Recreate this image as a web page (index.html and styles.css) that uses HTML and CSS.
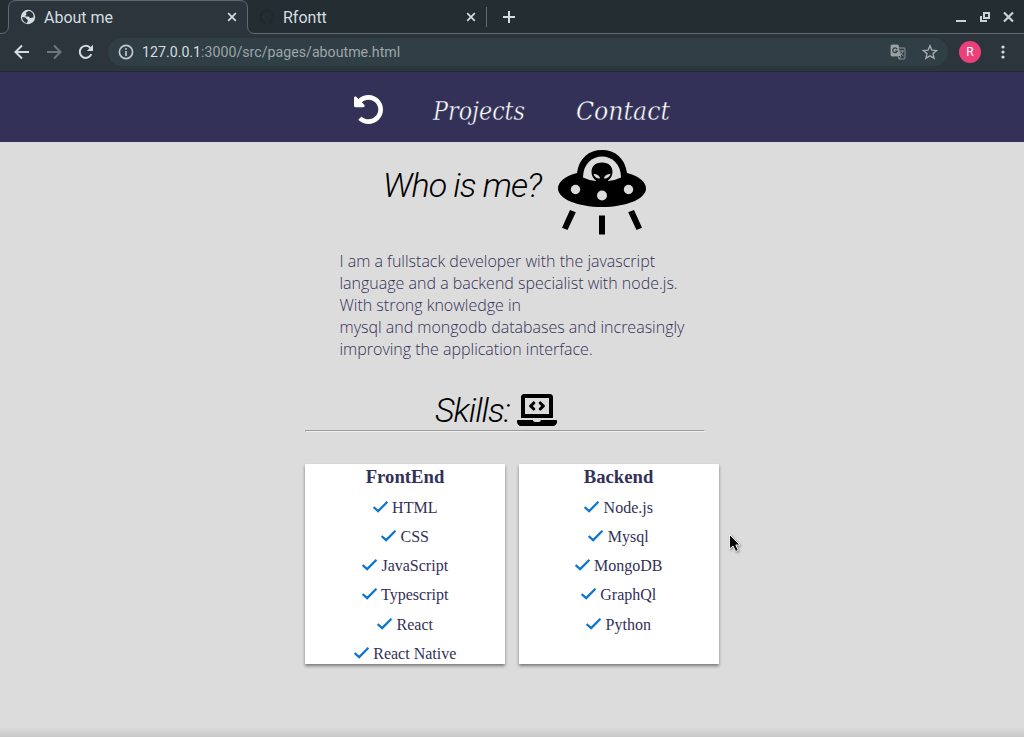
FILE: index.html
```html
<!DOCTYPE html>
<html lang="en">
<head>
<meta charset="utf-8">
<title>About me</title>
<link rel="stylesheet" href="styles.css">
</head>
<body>
<div class="browser">
  <header class="tabstrip">
    <svg class="tab-outline" width="1024" height="35" viewBox="0 0 1024 35"><path class="tab-shape" d="M-1 33.5H1Q8.500 33.500 8.500 26V8Q8.500 .5 16 .5H240Q247.500 .5 247.500 8V26Q247.500 33.500 255 33.500H1025V36H-1Z"/></svg>
    <div class="tab">
      <svg class="favicon" viewBox="0 0 16 16"><circle cx="8" cy="8" r="7.200" fill="#d3dde0"/><path d="M2 8.200c1.800-.2 3.700.1 4.200 1.400.3 1 1.700.7 1.700 1.900 0 .9-.8 1-.8 2.700C4 13.500 2.100 11.200 2 8.200ZM8 2c-.3 1-1.700.8-2 1.800-.2.800.7 1 .5 1.800-.2.700-1.200.6-1.200 1.300 0 .8 1.600.4 3 .5 1.200.1 1.100 1.600 2.300 1.700 1 .1 1.200-.7 2.900-.7C14 4.400 11.700 2 8 2Z" fill="#2b353b"/></svg>
      <span class="tab-title">About me</span>
      <svg class="close" viewBox="0 0 10 10"><path d="M1.200 1.200l7.600 7.600M8.800 1.200L1.200 8.800"/></svg>
    </div>
    <div class="tab second">
      <svg class="favicon" viewBox="0 0 16 16"><circle cx="8" cy="8" r="7.500" fill="#20292e"/><path d="M6 15v-3c-2-.7-3-2-3-4s.5-2.500 1-3V3l2 1h4l2-1v2c.5.500 1 1 1 3s-1 3.300-3 4v3Z" fill="#232d32"/></svg>
      <span class="tab-title">Rfontt</span>
      <svg class="close" viewBox="0 0 10 10"><path d="M1.200 1.200l7.600 7.600M8.800 1.200L1.200 8.800"/></svg>
    </div>
    <i class="divider"></i>
    <svg class="newtab" viewBox="0 0 12 12"><path d="M6 0v12M0 6h12"/></svg>
    <svg class="winctl" viewBox="0 0 60 14"><path d="M1 11h10" stroke-width="2"/><path d="M29 3h5v5h-5z" stroke-width="2"/><path d="M26 6v5h6" stroke-width="2"/><path d="M49 2.500l9 9M58 2.500l-9 9" stroke-width="2.200"/></svg>
  </header>
  <div class="toolbar">
    <svg class="ic back" viewBox="0 0 16 16"><path d="M15 8H2M8 1.500L1.500 8 8 14.500"/></svg>
    <svg class="ic forward" viewBox="0 0 16 16"><path d="M1 8h13M8 1.500L14.500 8 8 14.500"/></svg>
    <svg class="ic reload" viewBox="0 0 16 16"><path d="M13.300 10.200A6 6 0 1 1 12 3.600L13.500 5"/><path d="M15 .8V7H8.800z" fill="#d3dde0" stroke="none"/></svg>
    <div class="omnibox">
      <svg class="info" viewBox="0 0 16 16"><circle cx="8" cy="8" r="6.600"/><path d="M8 7v5M8 4v1.700"/></svg>
      <span class="url"><b>127.0.0.1</b>:3000/src/pages/aboutme.html</span>
      <svg class="translate" viewBox="0 0 16 16"><path d="M2 1h6l1 3h5q1 0 1 1v9q0 1-1 1H9l-1-3H2q-1 0-1-1V2q0-1 1-1Z" fill="none" stroke="#8d9598"/><path d="M1 1h7l3 11H1z" fill="#9aa1a4"/><path d="M7.200 5.300A2.300 2.300 0 1 0 7.300 7H5" fill="none" stroke="#303e45" stroke-width="1.200"/><path d="M9.500 7H14M12 6v1M13 7q-.5 3-3 4M10.500 8.500q1 2.500 3 3.500M9 15l2-3" fill="none" stroke="#8d9598"/></svg>
      <svg class="star" viewBox="0 0 16 16"><path d="M8 1.700l1.900 4.400 4.700.4L11 9.600l1.100 4.600L8 11.800l-4.100 2.400L5 9.600 1.400 6.500l4.700-.4z"/></svg>
    </div>
    <span class="avatar">R</span>
    <svg class="kebab" viewBox="0 0 4 14"><circle cx="2" cy="2" r="1.600"/><circle cx="2" cy="7" r="1.600"/><circle cx="2" cy="12" r="1.600"/></svg>
  </div>
</div>

<nav class="nav">
  <a class="home"><svg viewBox="8 8 496 496" width="29" height="29"><path fill="#fff" d="M255.545 8c-66.269.119-126.438 26.233-170.86 68.685L48.971 40.971C33.851 25.851 8 36.559 8 57.941V192c0 13.255 10.745 24 24 24h134.059c21.382 0 32.090-25.851 16.971-40.971l-41.750-41.750c30.864-28.899 70.801-44.907 113.230-45.273 92.398-.798 170.283 73.977 169.484 169.442C423.236 348.009 349.816 424 256 424c-41.127 0-79.997-14.678-110.630-41.556-4.743-4.161-11.906-3.908-16.368.553L89.340 422.659c-4.872 4.872-4.631 12.815.482 17.433C133.798 479.813 192.074 504 256 504c136.966 0 247.999-111.033 248-247.998C504.001 119.193 392.354 7.755 255.545 8z"/></svg></a>
  <a><svg class="link" width="104" height="44"><text x="5" y="28" textLength="92" lengthAdjust="spacingAndGlyphs">Projects</text></svg></a>
  <a class="contact"><svg class="link" width="104" height="44"><text x="5" y="28" textLength="94" lengthAdjust="spacingAndGlyphs">Contact</text></svg></a>
</nav>

<main class="page">
  <div class="who">
    <h1>Who is me?</h1>
    <svg class="ufo" width="88" height="86" viewBox="0 0 88 86">
      <path d="M19 23C21 8 31 0 44 0S67 8 69 23C81 26 88 32 88 38.500 88 49 68 57 44 57S0 49 0 38.500C0 32 7 26 19 23Z"/>
      <path class="hole" d="M25 27.500C25 14 34 6.500 44 6.500s19 7.500 19 21q-6 3-13 3.500H38Q31 30.500 25 27.500Z"/>
      <path d="M44 12.500c7 0 10.500 4 10.500 9.500 0 4-2 6.500-4.500 8.500v2H38v-2c-2.500-2-4.500-4.500-4.500-8.500 0-5.500 3.500-9.500 10.500-9.500Z"/>
      <path class="hole" d="M35.500 23.800c3.300.2 5.800 1.800 6.800 4.700-3.500.2-6.200-1.600-6.800-4.700ZM52.500 23.800c-3.300.2-5.800 1.800-6.800 4.700 3.500.2 6.200-1.600 6.800-4.700Z"/>
      <circle class="hole" cx="17.500" cy="39.500" r="4.700"/><circle class="hole" cx="44" cy="45.500" r="5"/><circle class="hole" cx="70.500" cy="39.500" r="4.700"/>
      <path d="M12 60l5.800 2.300L9.500 80 4 77.800ZM41 65.500h6v19h-6ZM76 60l-5.800 2.300L78.500 80l5.500-2.200Z"/>
    </svg>
  </div>
  <p class="bio">I am a fullstack developer with the javascript<br>language and a backend specialist with node.js.<br>With strong knowledge in<br>mysql and mongodb databases and increasingly<br>improving the application interface.</p>
  <div class="skills">
    <h2>Skills:</h2>
    <svg width="40" height="32" viewBox="0 0 640 512"><path d="M255.030 261.650c6.250 6.250 16.380 6.250 22.630 0l11.310-11.310c6.250-6.250 6.250-16.380 0-22.630L253.250 192l35.710-35.720c6.250-6.250 6.250-16.380 0-22.630l-11.310-11.310c-6.250-6.250-16.380-6.250-22.630 0l-58.340 58.340c-6.250 6.250-6.250 16.380 0 22.630l58.350 58.340zm96.010-11.300l11.310 11.310c6.250 6.250 16.380 6.250 22.630 0l58.340-58.340c6.250-6.250 6.250-16.380 0-22.630l-58.340-58.340c-6.250-6.250-16.380-6.250-22.630 0l-11.310 11.310c-6.250 6.250-6.250 16.380 0 22.630L386.750 192l-35.710 35.720c-6.250 6.250-6.250 16.380 0 22.630zM624 416H381.540c-.74 19.810-14.710 32-32.740 32H288c-18.690 0-33.020-17.470-32.770-32H16c-8.800 0-16 7.200-16 16v16c0 35.200 28.800 64 64 64h512c35.200 0 64-28.800 64-64v-16c0-8.800-7.200-16-16-16zM576 48c0-26.400-21.600-48-48-48H112C85.600 0 64 21.600 64 48v336h512V48zm-64 272H128V64h384v256z"/></svg>
  </div>
  <hr class="rule">
  <div class="cards">
    <section class="card">
      <h3>FrontEnd</h3>
      <ul>
        <li><svg class="check" viewBox="0 0 14 12"><path d="M.5 6.500L4.800 10.300 13.500 1.500"/></svg>HTML</li>
        <li><svg class="check" viewBox="0 0 14 12"><path d="M.5 6.500L4.800 10.300 13.500 1.500"/></svg>CSS</li>
        <li><svg class="check" viewBox="0 0 14 12"><path d="M.5 6.500L4.800 10.300 13.500 1.500"/></svg>JavaScript</li>
        <li><svg class="check" viewBox="0 0 14 12"><path d="M.5 6.500L4.800 10.300 13.500 1.500"/></svg>Typescript</li>
        <li><svg class="check" viewBox="0 0 14 12"><path d="M.5 6.500L4.800 10.300 13.500 1.500"/></svg>React</li>
        <li><svg class="check" viewBox="0 0 14 12"><path d="M.5 6.500L4.800 10.300 13.500 1.500"/></svg>React Native</li>
      </ul>
    </section>
    <section class="card backend">
      <h3>Backend</h3>
      <ul>
        <li><svg class="check" viewBox="0 0 14 12"><path d="M.5 6.500L4.800 10.300 13.500 1.500"/></svg>Node.js</li>
        <li><svg class="check" viewBox="0 0 14 12"><path d="M.5 6.500L4.800 10.300 13.500 1.500"/></svg>Mysql</li>
        <li><svg class="check" viewBox="0 0 14 12"><path d="M.5 6.500L4.800 10.300 13.500 1.500"/></svg>MongoDB</li>
        <li><svg class="check" viewBox="0 0 14 12"><path d="M.5 6.500L4.800 10.300 13.500 1.500"/></svg>GraphQl</li>
        <li><svg class="check" viewBox="0 0 14 12"><path d="M.5 6.500L4.800 10.300 13.500 1.500"/></svg>Python</li>
      </ul>
    </section>
  </div>
</main>
<svg class="cursor" width="16" height="22" viewBox="0 0 16 22"><path d="M1.500 1.500V16L5 13l2.700 5.500 2.600-1.200L7.800 12H12Z" fill="#0a0a0a" stroke="#eee" stroke-width="1"/></svg>
</body>
</html>
```
FILE: styles.css
```css
* { box-sizing: border-box; }
body {
  margin: 0;
  height: 737px;
  overflow: hidden;
  background: linear-gradient(#dcdcdc 0 727px, #c8c8c8 737px);
  font-family: "Liberation Serif", serif;
  color: #333157;
}
svg { display: block; flex: none; }
h1, h2, h3, p, ul { margin: 0; padding: 0; }

.browser {
  height: 72px;
  background: #2b353b;
  border-bottom: 1px solid #20292e;
  font-family: Roboto, sans-serif;
  color: #d3dde0;
}
.tabstrip {
  position: relative;
  display: flex;
  align-items: center;
  height: 34px;
  padding-left: 8px;
  background: #232d32;
}
.tab-outline { position: absolute; left: 0; top: 0; }
.tab-shape { fill: #2b353b; stroke: #5f6b70; }
.tab {
  position: relative;
  display: flex;
  align-items: center;
  width: 239px;
  height: 34px;
  padding: 0 10px 0 12px;
}
.favicon { width: 16px; height: 16px; }
.tab-title { flex: 1; margin-left: 8px; padding-top: 2px; font-size: 16px; line-height: 34px; }
.close { width: 10px; height: 10px; fill: none; stroke: #d3dde0; stroke-width: 1.7; }
.divider { width: 1px; height: 20px; background: #5f6b70; }
.newtab { position: relative; width: 12px; height: 12px; margin-left: 16px; stroke: #d3dde0; stroke-width: 2; }
.winctl { position: relative; width: 60px; height: 14px; margin: 0 9px 0 auto; fill: none; stroke: #c8d3d7; }

.toolbar { display: flex; align-items: center; height: 36px; padding: 0 19px 0 14px; }
.ic { width: 16px; height: 16px; margin-right: 16px; fill: none; stroke: #d3dde0; stroke-width: 2; }
.forward { stroke: #6b777c; }
.reload { margin-right: 14px; }
.omnibox {
  display: flex;
  align-items: center;
  width: 840px;
  height: 28px;
  padding: 0 10px;
  border-radius: 14px;
  background: #303e45;
}
.info { width: 16px; height: 16px; fill: none; stroke: #c3ccd0; stroke-width: 1.6; }
.url { flex: 1; margin-left: 8px; font-size: 14.200px; color: #9da6aa; }
.url b { font-weight: 400; color: #d3dde0; }
.translate { width: 16px; height: 16px; }
.star { width: 16px; height: 16px; margin-left: 16px; fill: none; stroke: #a2aaae; stroke-width: 1.4; }
.avatar {
  width: 22px;
  height: 22px;
  margin-left: 11px;
  border-radius: 50%;
  background: #ec407a;
  color: #fff;
  font-size: 12px;
  line-height: 22px;
  text-align: center;
}
.kebab { width: 4px; height: 14px; margin-left: auto; fill: #d3dde0; }

.nav { display: flex; height: 70px; padding-left: 354px; background: #333157; }
.home { margin-top: 23px; margin-right: 45px; }
.nav a + a { padding-top: 20px; }
.nav .contact { margin-left: 39px; }
.link { overflow: visible; }
.link text {
  font: italic 26px "DejaVu Serif Condensed", "DejaVu Serif", serif;
  fill: #fff;
  stroke: #333157;
  stroke-width: .4px;
}

.page { width: 414px; margin-left: 305px; }
.who { display: flex; padding: 8px 0 0 78px; height: 108px; }
h1, h2 {
  font: italic 300 34px/40px Roboto, sans-serif;
  letter-spacing: -1px;
  color: #000;
}
.who h1 { width: 175px; padding-top: 15px; white-space: nowrap; }
.hole { fill: #dcdcdc; }
.bio { padding-left: 34.500px; font: 300 16px/22px "Open Sans", sans-serif; white-space: nowrap; }
.skills { display: flex; height: 70px; padding: 34px 0 0 130px; }
.skills h2 { width: 82px; margin-top: -4px; }
.rule { width: 400px; margin: 0; border: 1px inset #eee; }
.cards { display: flex; gap: 14px; margin-top: 32px; }
.card {
  width: 200px;
  height: 200px;
  background: #fff;
  box-shadow: 0 2px 3px rgba(0, 0, 0, .45);
}
.backend { padding-right: 1px; }
h3 { font-size: 18.700px; line-height: 21px; padding-top: 2px; height: 28.800px; text-align: center; }
ul { list-style: none; }
li { display: flex; justify-content: center; height: 29.200px; font-size: 16px; line-height: 29px; }
.check { width: 15px; height: 13px; margin: 7px 4.500px 0 0; fill: none; stroke: #0b76d1; stroke-width: 2.100; }
.cursor { position: absolute; left: 728px; top: 533px; filter: drop-shadow(1px 1px 1px rgba(0, 0, 0, .4)); }
```
